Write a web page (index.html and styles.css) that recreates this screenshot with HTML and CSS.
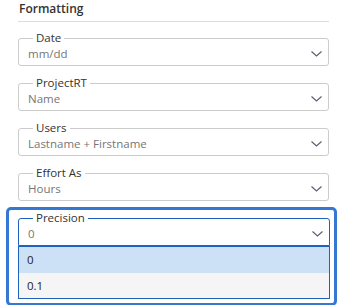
FILE: index.html
```html
<!DOCTYPE html>
<html lang="en">
<head>
  <meta charset="UTF-8" />
  <title>Formatting</title>
  <link rel="stylesheet" href="styles.css">
</head>
<body>
  <div class="panel">
    <h2 class="section-title">Formatting</h2>

    <fieldset class="field">
      <legend>Date</legend>
      <div class="select">
        <span class="value">mm/dd</span>
        <svg class="chevron" width="11" height="6" viewBox="0 0 11 6"><polyline points="0.5,0.5 5.5,5 10.5,0.5" /></svg>
      </div>
    </fieldset>

    <fieldset class="field">
      <legend>ProjectRT</legend>
      <div class="select">
        <span class="value">Name</span>
        <svg class="chevron" width="11" height="6" viewBox="0 0 11 6"><polyline points="0.5,0.5 5.5,5 10.5,0.5" /></svg>
      </div>
    </fieldset>

    <fieldset class="field">
      <legend>Users</legend>
      <div class="select">
        <span class="value">Lastname + Firstname</span>
        <svg class="chevron" width="11" height="6" viewBox="0 0 11 6"><polyline points="0.5,0.5 5.5,5 10.5,0.5" /></svg>
      </div>
    </fieldset>

    <fieldset class="field">
      <legend>Effort As</legend>
      <div class="select">
        <span class="value">Hours</span>
        <svg class="chevron" width="11" height="6" viewBox="0 0 11 6"><polyline points="0.5,0.5 5.5,5 10.5,0.5" /></svg>
      </div>
    </fieldset>

    <div class="focus-ring">
      <fieldset class="field open">
        <legend>Precision</legend>
        <div class="select">
          <span class="value">0</span>
          <svg class="chevron" width="11" height="6" viewBox="0 0 11 6"><polyline points="0.5,0.5 5.5,5 10.5,0.5" /></svg>
        </div>
      </fieldset>
      <ul class="options">
        <li class="option selected">0</li>
        <li class="option">0.1</li>
      </ul>
    </div>
  </div>
</body>
</html>
```

FILE: styles.css
```css
body {
  margin: 0;
  font-family: "Open Sans", "Liberation Sans", sans-serif;
  background: #fff;
  color: #333;
}
.panel {
  padding: 0 14px 0 18px;
}
.section-title {
  margin: 0 0 9px;
  padding: 1px 0 4px 1px;
  font-size: 12px;
  font-weight: 600;
  line-height: 16px;
  color: #333;
  border-bottom: 1px solid #ddd;
}
.field {
  margin: 0 0 10px;
  padding: 0 6px 2px 9px;
  border: 1px solid #ccc;
  border-radius: 3px;
  min-width: 0;
}
.field legend {
  margin-left: 5px;
  padding: 0 3px;
  font-size: 11.5px;
  line-height: 14px;
  color: #333;
}
.select {
  display: flex;
  align-items: center;
  justify-content: space-between;
  height: 18px;
}
.value {
  font-size: 11.5px;
  line-height: 18px;
  color: #767676;
}
.chevron polyline {
  fill: none;
  stroke: #5a6270;
  stroke-width: 1.2;
}
.focus-ring {
  margin: -4px -8px 0 -12px;
  padding: 1px 4px 4px 9px;
  border: 3px solid #3478d4;
  border-radius: 5px;
}
.field.open {
  margin: 0;
  border-color: #1f62be;
  border-radius: 3px 3px 0 0;
}
.options {
  list-style: none;
  margin: 0;
  padding: 0;
  border: 1px solid #1f62be;
}
.option {
  height: 25px;
  padding-left: 8px;
  font-size: 11.5px;
  line-height: 25px;
  color: #222;
  background: #f5f5f5;
}
.option.selected {
  height: 26px;
  line-height: 26px;
  background: #cde1f6;
}
```
